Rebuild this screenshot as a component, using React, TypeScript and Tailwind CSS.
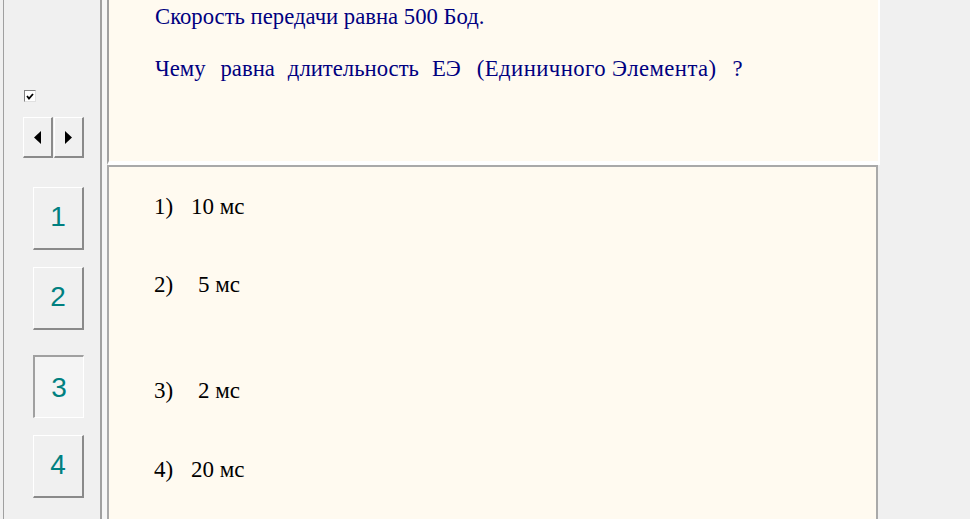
import React from 'react';

const answers = [
  { label: '1)', value: '10 мс', pad: 'pl-0', mt: 'mt-[26px]' },
  { label: '2)', value: '5 мс', pad: 'pl-[7px]', mt: 'mt-[50px]' },
  { label: '3)', value: '2 мс', pad: 'pl-[7px]', mt: 'mt-[78px]' },
  { label: '4)', value: '20 мс', pad: 'pl-0', mt: 'mt-[51px]' },
];

// question words with the gap (px) before each one
const question = [
  { w: 'Чему', cls: 'ml-0' },
  { w: 'равна', cls: 'ml-[15px]' },
  { w: 'длительность', cls: 'ml-[13px]' },
  { w: 'ЕЭ', cls: 'ml-[13px]' },
  { w: '(Единичного', cls: 'ml-[16px] tracking-[0.45px]' },
  { w: 'Элемента)', cls: 'ml-[6px] tracking-[0.45px]' },
  { w: '?', cls: 'ml-[16px]' },
];

const NumButton: React.FC<{ n: number; pressed?: boolean; mt: string }> = ({ n, pressed, mt }) => (
  <div
    className={
      'w-[51px] h-[63px] flex items-center justify-center text-[28px] text-[#008080] ' +
      mt +
      (pressed
        ? ' bg-[#f4f4f4] border-t-2 border-l-2 border-b border-r border-t-[#a0a0a0] border-l-[#a0a0a0] border-b-white border-r-white'
        : ' bg-[#f0f0f0] border-t border-l border-b-2 border-r-2 border-t-white border-l-white border-b-[#8a8a8a] border-r-[#8a8a8a]')
    }
    style={{ fontFamily: '"Liberation Sans", Arial, sans-serif' }}
  >
    <span className={pressed ? 'pt-[1px]' : 'pb-[2px]'}>{n}</span>
  </div>
);

const ArrowButton: React.FC<{ dir: 'left' | 'right' }> = ({ dir }) => (
  <div className="w-[30px] h-[41px] bg-[#f0f0f0] border-t border-l border-b-2 border-r-2 border-t-white border-l-white border-b-[#8a8a8a] border-r-[#8a8a8a] flex items-center justify-center">
    <svg width="7" height="13" viewBox="0 0 7 13">
      {dir === 'left' ? <polygon points="7,0 7,13 0,6.5" fill="#000" /> : <polygon points="0,0 0,13 7,6.5" fill="#000" />}
    </svg>
  </div>
);

export default function App() {
  return (
    <div className="w-[970px] h-[519px] bg-[#f0f0f0] flex overflow-hidden">
      {/* left tool panel */}
      <div className="ml-[3px] w-[99px] h-full border-l border-r-2 border-l-[#a0a0a0] border-r-[#a0a0a0] flex flex-col">
        <div className="ml-[20px] mt-[90px] w-[12px] h-[12px] bg-white border-t border-l border-b border-r border-t-[#808080] border-l-[#808080] border-b-[#e0e0e0] border-r-[#e0e0e0] flex items-center justify-center">
          <svg width="8" height="7" viewBox="0 0 8 7">
            <polyline points="1,3 3,5.5 7,1" fill="none" stroke="#000" strokeWidth="1.8" />
          </svg>
        </div>
        <div className="ml-[19px] mt-[15px] flex gap-[1px]">
          <ArrowButton dir="left" />
          <ArrowButton dir="right" />
        </div>
        <div className="ml-[29px] flex flex-col">
          <NumButton n={1} mt="mt-[29px]" />
          <NumButton n={2} mt="mt-[17px]" />
          <NumButton n={3} pressed mt="mt-[25px]" />
          <NumButton n={4} mt="mt-[17px]" />
        </div>
      </div>

      {/* separator */}
      <div className="w-[5px] h-full bg-[#f6f6f6]" />

      {/* content column */}
      <div className="w-[773px] h-full flex flex-col" style={{ fontFamily: '"Liberation Serif", "Times New Roman", serif' }}>
        <div className="h-[165px] bg-[#fffaf0] border-l-2 border-l-[#a0a0a0] border-r-2 border-r-white border-b-[4px] border-b-white pl-[46px] text-[22.7px] text-[#000080]">
          <div className="mt-[3px] leading-[28px]">Скорость передачи равна 500 Бод.</div>
          <div className="mt-[24px] leading-[28px] flex whitespace-pre">
            {question.map((q) => (
              <span key={q.w} className={q.cls}>{q.w}</span>
            ))}
          </div>
        </div>
        <div className="flex-1 mr-[2px] bg-[#fffaf0] border-t-2 border-l-2 border-r-2 border-[#a9a9a9] pl-[45px] text-[23px] text-black">
          {answers.map((a) => (
            <div key={a.label} className={'leading-[28px] whitespace-pre ' + a.mt}>
              <span className="inline-block w-[37px]">{a.label}</span>
              <span className={'inline-block ' + a.pad}>{a.value}</span>
            </div>
          ))}
        </div>
      </div>
    </div>
  );
}
